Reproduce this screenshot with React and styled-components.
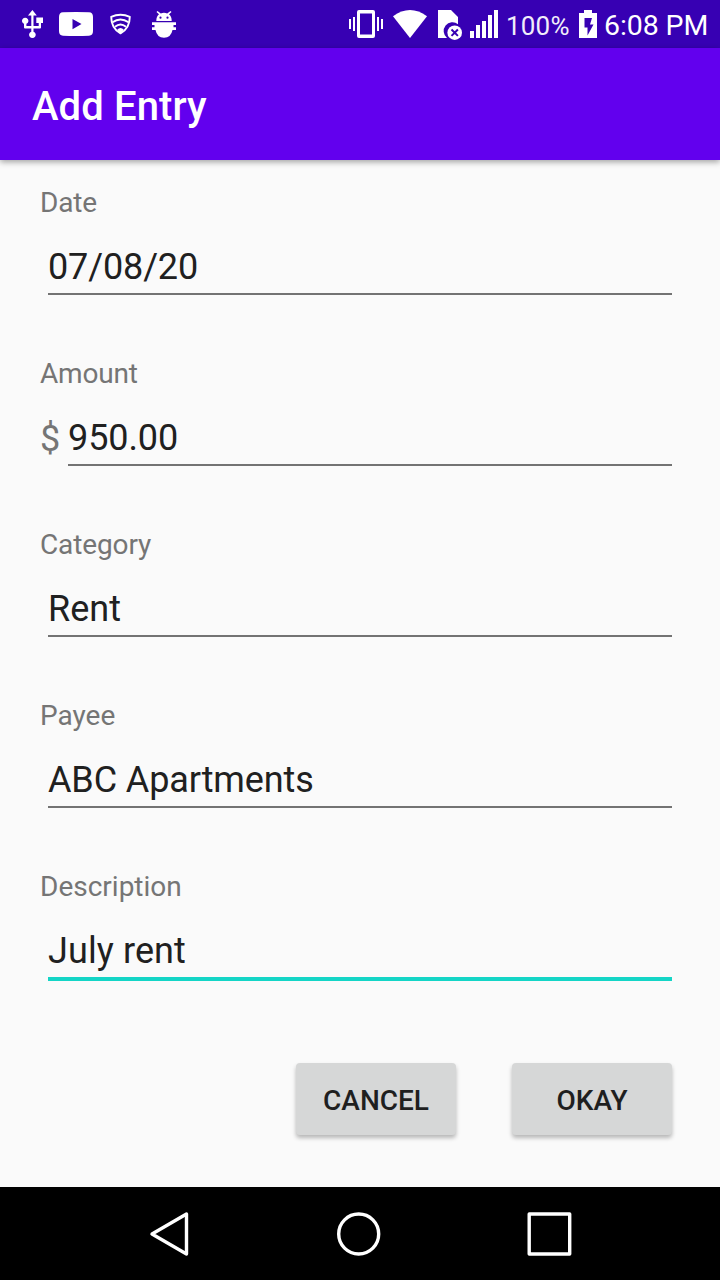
import React from "react";
import styled, { createGlobalStyle } from "styled-components";

const GlobalStyle = createGlobalStyle`
  *, *::before, *::after { box-sizing: border-box; }
  body { margin: 0; background: #fafafa; font-family: Roboto, sans-serif; }
`;

const Screen = styled.div`
  width: 720px;
  height: 1280px;
  display: flex;
  flex-direction: column;
  background: #fafafa;
  overflow: hidden;
`;

const StatusBar = styled.header`
  height: 48px;
  flex: none;
  display: flex;
  justify-content: space-between;
  background: #3700b3;
  color: #fff;
`;

const StatusGroup = styled.div`
  display: flex;
  align-items: center;
  padding: ${(p) => (p.$end ? "0 11px 0 0" : "0 0 0 22px")};
`;

const StatusIcon = styled.svg`
  display: block;
  flex: none;
  height: 48px;
  width: ${(p) => p.$w}px;
  margin-right: ${(p) => p.$gap || 0}px;
  fill: #fff;
`;

const BatteryText = styled.span`
  width: 73px;
  padding-top: 3px;
  font-size: 26px;
  line-height: 48px;
  letter-spacing: 0.2px;
  color: #f1edfa;
  white-space: nowrap;
`;

const Clock = styled.span`
  width: 105px;
  padding-top: 4px;
  font-size: 28.5px;
  line-height: 48px;
  letter-spacing: -0.1px;
  white-space: nowrap;
`;

const AppBar = styled.div`
  position: relative;
  height: 112px;
  flex: none;
  display: flex;
  align-items: center;
  padding: 6px 32px 0;
  background: #6200ee;
  box-shadow: 0 2px 6px rgba(0, 0, 0, 0.36);
`;

const Title = styled.h1`
  margin: 0;
  color: #fff;
  font-size: 40px;
  font-weight: 500;
  line-height: 48px;
  letter-spacing: 0.1px;
`;

const Form = styled.form`
  flex: 1;
  display: flex;
  flex-direction: column;
  padding: 26px 48px 0 40px;
`;

const Field = styled.div`
  height: 171px;
  flex: none;
`;

const Label = styled.label`
  display: block;
  height: 33px;
  margin-bottom: 27px;
  color: #757575;
  font-size: 28px;
  line-height: 33px;
  letter-spacing: ${(p) => p.$tracking}px;
`;

const InputRow = styled.div`
  display: flex;
  padding-left: ${(p) => (p.$prefixed ? 0 : 8)}px;
`;

const Prefix = styled.span`
  width: 28px;
  padding-top: 1px;
  color: #757575;
  font-size: 36px;
  line-height: 42px;
`;

const Input = styled.input`
  flex: 1;
  min-width: 0;
  height: ${(p) => (p.$active ? 51 : 49)}px;
  padding: 0 0 5px;
  border: 0;
  border-bottom: ${(p) => (p.$active ? "4px solid #14d5c6" : "2px solid #737373")};
  outline: none;
  background: transparent;
  color: #202020;
  font: 400 36px/42px Roboto, sans-serif;
  letter-spacing: ${(p) => p.$tracking}px;
`;

const Actions = styled.div`
  display: flex;
  justify-content: flex-end;
  gap: 56px;
  margin-top: 22px;
`;

const Button = styled.button`
  width: 160px;
  height: 72px;
  padding: 3px 0 0;
  border: 0;
  border-radius: 4px;
  background: #d6d7d7;
  color: #1f1f1f;
  font: 500 28px/33px Roboto, sans-serif;
  box-shadow: 0 3px 4px rgba(0, 0, 0, 0.27);
`;

const NavBar = styled.nav`
  height: 93px;
  flex: none;
  display: flex;
  align-items: center;
  justify-content: space-between;
  padding: 0 148px;
  background: #000;
`;

const NavIcon = styled.svg`
  width: 46px;
  height: 46px;
  fill: none;
  stroke: #fff;
  stroke-width: 3.4;
  stroke-linejoin: round;
`;

const fields = [
  { id: "date", label: "Date", value: "07/08/20", labelTracking: -0.2, tracking: -0.13 },
  { id: "amount", label: "Amount", value: "950.00", prefix: "$", labelTracking: -0.2, tracking: -0.1 },
  { id: "category", label: "Category", value: "Rent", labelTracking: -0.12 },
  { id: "payee", label: "Payee", value: "ABC Apartments", tracking: -0.12 },
  { id: "description", label: "Description", value: "July rent", active: true, tracking: 0.1 },
];

const UsbIcon = () => (
  <StatusIcon $w={21} $gap={16} viewBox="22 0 21 48">
    <path d="M32.400 10l4.400 5.500h-3.300V26h5.200v-3H36.300v-5.500H43V23h-2v4.500q0 1-1 1h-6.500v3.200a3.300 3.300 0 1 1-2.200 0v-3.200H25q-1 0-1-1v-3.700a3.200 3.200 0 1 1 2.400 0V26h4.900V15.500H28z" />
  </StatusIcon>
);

const VideoIcon = () => (
  <StatusIcon $w={34} $gap={17} viewBox="59 0 34 48">
    <path fillRule="evenodd" d="M63 12.300Q76 11.700 89 12.300Q93 12.500 93 17V31Q93 35.500 89 35.700Q76 36.300 63 35.700Q59 35.500 59 31V17Q59 12.500 63 12.300ZM72.500 19V29.200L81.500 24.100Z" />
  </StatusIcon>
);

const ShieldIcon = () => (
  <StatusIcon $w={21} $gap={21} viewBox="109.500 0 21 48">
    <g fill="none" stroke="#fff" strokeWidth="1.9" strokeLinejoin="round">
      <path d="M110.700 16.800Q120 12.600 129.300 16.800Q129.300 28.500 120 33.300Q110.700 28.500 110.700 16.800Z" />
      <path d="M112 22.300Q120 16.700 128 22.300M114.500 26.800Q120 22 125.500 26.800" />
    </g>
    <path d="M116.600 29.800Q120 26.400 123.400 29.800L120 33.300Z" />
  </StatusIcon>
);

const BugIcon = () => (
  <StatusIcon $w={24} viewBox="152 0 24 48">
    <path fillRule="evenodd" d="M156.300 21Q156.300 16.200 159 14.200L156.500 12L157.500 11L160.800 13.500Q164 12.200 167.200 13.500L170.500 11L171.500 12L169 14.200Q171.700 16.200 171.700 21ZM159.400 17.700a1.100 1.100 0 1 0 2.200 0a1.100 1.100 0 1 0-2.200 0M166.400 17.700a1.100 1.100 0 1 0 2.200 0a1.100 1.100 0 1 0-2.200 0" />
    <path d="M152 22.300H176V25H173.500V27.300H176V30H172.500Q171 37.700 164 37.700Q157 37.700 155.500 30H152V27.300H154.500V25H152Z" />
  </StatusIcon>
);

const VibrateIcon = () => (
  <StatusIcon $w={34} $gap={10} viewBox="349 0 34 48">
    <path fillRule="evenodd" d="M359 10H373Q375 10 375 12V36Q375 38 373 38H359Q357 38 357 36V12Q357 10 359 10ZM360 13.500V34.500H372V13.500Z" />
    <path d="M349 19h2v10h-2zM353 17h2v14h-2zM377 17h2v14h-2zM381 19h2v10h-2z" />
  </StatusIcon>
);

const WifiIcon = () => (
  <StatusIcon $w={34} $gap={11} viewBox="393 0 34 48">
    <path d="M393 16.300Q410 3.700 427 16.300L410 38Z" />
  </StatusIcon>
);

const SimIcon = () => (
  <StatusIcon $w={24} $gap={8} viewBox="438 0 24 48">
    <path d="M438 10H451L458 17V24.200A8.800 8.800 0 0 0 447 38H438Z" />
    <circle cx="454.700" cy="32.700" r="7.300" />
    <path d="M451.500 29.500L457.900 35.900M457.900 29.500L451.500 35.900" stroke="#3700b3" strokeWidth="2" />
  </StatusIcon>
);

const SignalIcon = () => (
  <StatusIcon $w={28} $gap={8} viewBox="470 0 28 48">
    <path d="M470 31h4v7h-4zM476 25h4v13h-4zM482 21h4v17h-4zM488 15h4v23h-4zM494 10h4v28h-4z" />
  </StatusIcon>
);

const BatteryIcon = () => (
  <StatusIcon $w={18} $gap={7} viewBox="579 0 18 48">
    <path fillRule="evenodd" d="M584 10H592V13H597V38H579V13H584ZM584.500 18V27.500H587.500V35.500L593.500 24.500H590L592 18Z" />
  </StatusIcon>
);

const FormField = ({ id, label, value, prefix, active, tracking = 0, labelTracking = 0 }) => (
  <Field>
    <Label htmlFor={id} $tracking={labelTracking}>{label}</Label>
    <InputRow $prefixed={Boolean(prefix)}>
      {prefix && <Prefix>{prefix}</Prefix>}
      <Input id={id} defaultValue={value} $active={active} $tracking={tracking} spellCheck={false} />
    </InputRow>
  </Field>
);

export default function App() {
  return (
    <Screen>
      <GlobalStyle />
      <StatusBar>
        <StatusGroup>
          <UsbIcon />
          <VideoIcon />
          <ShieldIcon />
          <BugIcon />
        </StatusGroup>
        <StatusGroup $end>
          <VibrateIcon />
          <WifiIcon />
          <SimIcon />
          <SignalIcon />
          <BatteryText>100%</BatteryText>
          <BatteryIcon />
          <Clock>6:08 PM</Clock>
        </StatusGroup>
      </StatusBar>
      <AppBar>
        <Title>Add Entry</Title>
      </AppBar>
      <Form>
        {fields.map((field) => (
          <FormField key={field.id} {...field} />
        ))}
        <Actions>
          <Button type="button">CANCEL</Button>
          <Button type="button">OKAY</Button>
        </Actions>
      </Form>
      <NavBar>
        <NavIcon viewBox="148 1210.500 46 46">
          <path d="M152 1233.500L186.500 1213.500V1253.500Z" />
        </NavIcon>
        <NavIcon viewBox="337.300 1210.500 46 46">
          <circle cx="359" cy="1233.500" r="20" />
        </NavIcon>
        <NavIcon viewBox="526 1210.500 46 46">
          <path d="M529.200 1213.500H569.700V1253.500H529.200Z" />
        </NavIcon>
      </NavBar>
    </Screen>
  );
}
